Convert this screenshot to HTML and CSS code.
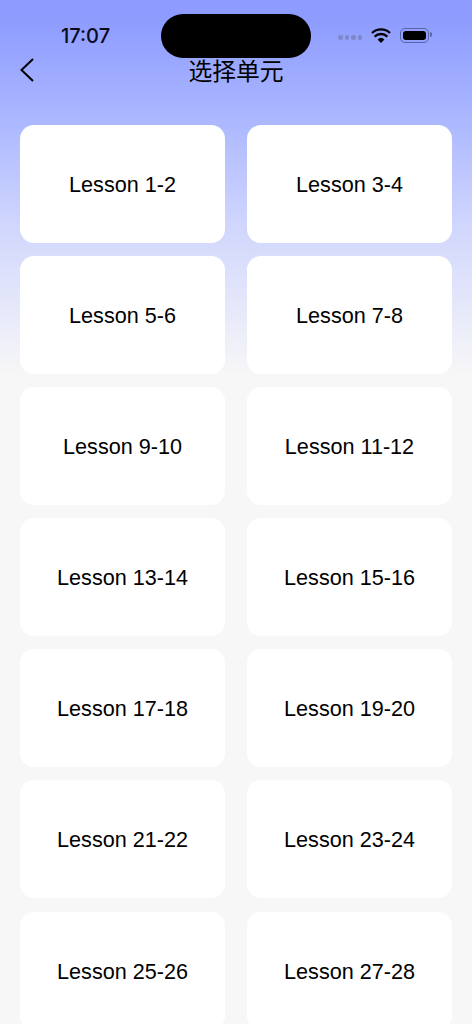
FILE: index.html
```html
<!DOCTYPE html>
<html lang="en">
<head>
    <meta charset="UTF-8">
    <meta name="viewport" content="width=device-width, initial-scale=1.0">
    <title>选择单元</title>
    <link rel="stylesheet" href="styles.css">
</head>
<body>
    <div class="page">
        <div class="island"></div>

        <div class="status-bar">
            <span class="time">17:07</span>
            <div class="status-icons">
                <div class="signal"><i></i><i></i><i></i><i></i></div>
                <svg class="wifi" width="20" height="15" viewBox="0 0 20 15">
                    <path d="M10 15 L6.6 11.4 A5 5 0 0 1 13.4 11.4 Z" fill="#000"/>
                    <path d="M3.6 8.6 A9.2 9.2 0 0 1 16.4 8.6" fill="none" stroke="#000" stroke-width="2.3"/>
                    <path d="M1 5 A13 13 0 0 1 19 5" fill="none" stroke="#000" stroke-width="2.3"/>
                </svg>
                <div class="battery"><div class="battery-level"></div></div>
            </div>
        </div>

        <div class="nav">
            <svg class="back" width="16" height="26" viewBox="0 0 16 26">
                <path d="M14 2 L2.5 13 L14 24" fill="none" stroke="#000" stroke-width="2"/>
            </svg>
            <h1>选择单元</h1>
        </div>

        <div class="lessons">
            <div class="lesson">Lesson 1-2</div>
            <div class="lesson">Lesson 3-4</div>
            <div class="lesson">Lesson 5-6</div>
            <div class="lesson">Lesson 7-8</div>
            <div class="lesson">Lesson 9-10</div>
            <div class="lesson">Lesson 11-12</div>
            <div class="lesson">Lesson 13-14</div>
            <div class="lesson">Lesson 15-16</div>
            <div class="lesson">Lesson 17-18</div>
            <div class="lesson">Lesson 19-20</div>
            <div class="lesson">Lesson 21-22</div>
            <div class="lesson">Lesson 23-24</div>
            <div class="lesson">Lesson 25-26</div>
            <div class="lesson">Lesson 27-28</div>
        </div>
    </div>
</body>
</html>
```

FILE: styles.css
```css
html, body {
    margin: 0;
    height: 100%;
    overflow: hidden;
}
body {
    font-family: "Liberation Sans", Arial, sans-serif;
    color: #000;
    background: #f7f7f7;
}
.page {
    position: relative;
    height: 1024px;
    overflow: hidden;
    background: linear-gradient(180deg, #8e9cff 0, #8e9cff 20px, #adb9ff 125px, #d0d6fd 225px, #f7f7f7 375px);
}
.island {
    position: absolute;
    top: 14px;
    left: 161px;
    width: 150px;
    height: 44px;
    border-radius: 22px;
    background: #000;
}
.status-bar {
    height: 52px;
    padding: 0 43px 0 61px;
    display: flex;
    justify-content: space-between;
    align-items: center;
    box-sizing: border-box;
}
.time {
    font-family: Inter, sans-serif;
    font-size: 20px;
    font-weight: 500;
    margin-top: 19px;
    color: #0a0a1e;
}
.status-icons {
    display: flex;
    align-items: center;
    margin-top: 18px;
}
.signal {
    display: flex;
    gap: 2px;
    margin-right: 9px;
    margin-top: 5px;
}
.signal i {
    width: 4.5px;
    height: 4.5px;
    border-radius: 50%;
    background: #7f88c8;
}
.wifi {
    margin-right: 9px;
}
.battery {
    width: 29px;
    height: 15px;
    padding: 2px;
    box-sizing: border-box;
    border: 1px solid #5a62a8;
    border-radius: 5px;
    position: relative;
}
.battery::after {
    content: "";
    position: absolute;
    right: -4px;
    top: 3px;
    width: 2px;
    height: 5px;
    border-radius: 0 2px 2px 0;
    background: #5a62a8;
}
.battery-level {
    height: 100%;
    border-radius: 3px;
    background: #000;
}
.nav {
    height: 38px;
    position: relative;
    display: flex;
    justify-content: center;
    align-items: center;
}
.nav h1 {
    margin: 0;
    font-family: "Noto Sans CJK SC", sans-serif;
    font-size: 23.8px;
    font-weight: 400;
    line-height: 38px;
    margin-top: -3px;
}
.back {
    position: absolute;
    left: 18.5px;
    top: 5px;
}
.lessons {
    display: grid;
    grid-template-columns: 205px 205px;
    grid-auto-rows: 118px;
    justify-content: space-between;
    gap: 13.1px 22px;
    padding: 35px 20px 0;
}
.lesson {
    display: flex;
    justify-content: center;
    align-items: center;
    padding-top: 2px;
    box-sizing: border-box;
    background: #fff;
    border-radius: 14px;
    font-size: 21.6px;
}
```
